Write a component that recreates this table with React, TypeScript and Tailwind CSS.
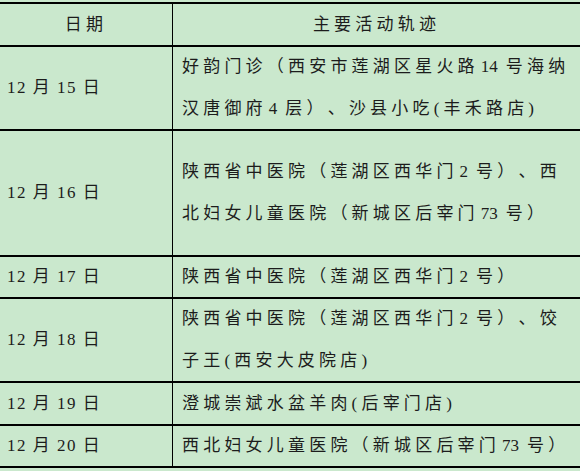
const rows: { date: string; h: string; lines: string[] }[] = [
  { date: "12 月 15 日", h: "h-[84px]", lines: ["好韵门诊（西安市莲湖区星火路14号海纳", "汉唐御府4层）、沙县小吃(丰禾路店)"] },
  { date: "12 月 16 日", h: "h-[126px]", lines: ["陕西省中医院（莲湖区西华门2号）、西", "北妇女儿童医院（新城区后宰门73号）"] },
  { date: "12 月 17 日", h: "h-[42px]", lines: ["陕西省中医院（莲湖区西华门2号）"] },
  { date: "12 月 18 日", h: "h-[84px]", lines: ["陕西省中医院（莲湖区西华门2号）、饺", "子王(西安大皮院店)"] },
  { date: "12 月 19 日", h: "h-[43px]", lines: ["澄城崇斌水盆羊肉(后宰门店)"] },
  { date: "12 月 20 日", h: "h-[42px]", lines: ["西北妇女儿童医院（新城区后宰门73号）"] },
];

function Line({ text }: { text: string }) {
  const parts = text.split(/(\d+)/);
  return (
    <div className="whitespace-nowrap">
      {parts.map((p, i) =>
        /^\d+$/.test(p) ? (
          <span key={i} className="tracking-normal ml-[2px] mr-[8px]">
            {p}
          </span>
        ) : (
          <span key={i}>{p}</span>
        )
      )}
    </div>
  );
}

export default function App() {
  return (
    <div
      className="w-[580px] h-[471px] overflow-hidden bg-[#cae8cd] pt-[2px] text-[17px] text-[#1c1c1c] tracking-[4.2px] [text-spacing-trim:space-all]"
      style={{ fontFamily: '"Liberation Serif", "Noto Sans CJK SC", serif' }}
    >
      <div className="border-t-2 border-black">
        <div className="flex h-[43px] border-b-2 border-black">
          <div className="w-[173px] flex items-center justify-center border-r border-black">日期</div>
          <div className="flex-1 flex items-center justify-center">主要活动轨迹</div>
        </div>
        {rows.map((r) => (
          <div key={r.date} className={`flex ${r.h} border-b-2 border-black`}>
            <div className="w-[173px] flex items-center pl-[7px] border-r border-black whitespace-pre tracking-[1.5px]">
              {r.date}
            </div>
            <div className="flex-1 flex flex-col justify-center pl-[9px] leading-[42px]">
              {r.lines.map((l) => (
                <Line key={l} text={l} />
              ))}
            </div>
          </div>
        ))}
      </div>
    </div>
  );
}
